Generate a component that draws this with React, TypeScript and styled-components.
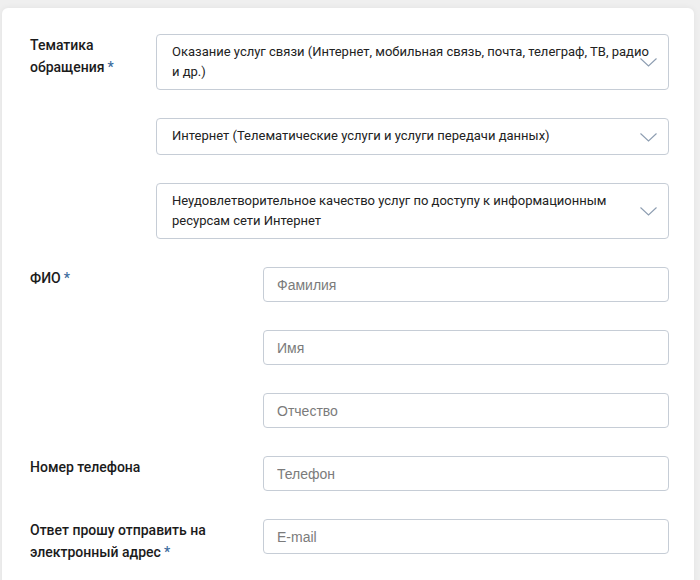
import React from 'react';
import styled, { createGlobalStyle } from 'styled-components';

const GlobalStyle = createGlobalStyle`
  html, body {
    margin: 0;
    padding: 0;
    background: #efefef;
  }
  body {
    font-family: Roboto, "Liberation Sans", Arial, sans-serif;
  }
`;

const Page = styled.div`
  padding: 8px 6px 0 2px;
`;

const Card = styled.form`
  background: #fff;
  border-radius: 6px 6px 0 0;
  box-shadow: 0 0 6px rgba(0, 0, 0, 0.06);
  padding: 26px 25px 30px 28px;
  display: flex;
  flex-direction: column;
  gap: 28px;
`;

const Row = styled.div<{ $label: number }>`
  display: grid;
  grid-template-columns: ${(p) => p.$label}px 1fr;
  align-items: start;
`;

const Label = styled.label`
  font-size: 14px;
  font-weight: 500;
  line-height: 22px;
  color: #1b1b1b;
`;

const Star = styled.span`
  color: #3d6c9e;
  margin-left: 3px;
`;

const Fields = styled.div<{ $gap: number }>`
  display: flex;
  flex-direction: column;
  gap: ${(p) => p.$gap}px;
`;

const SelectBox = styled.div`
  position: relative;
  border: 1px solid #c6cdd6;
  border-radius: 4px;
  background: #fff;
  padding: 7px 12px 7px 15px;
  font-size: 13px;
  line-height: 20px;
  color: #222;
  min-height: 21px;
`;

const Chevron = styled.svg`
  position: absolute;
  right: 11px;
  top: 50%;
  margin-top: -4px;
  width: 17px;
  height: 9px;
`;

const Input = styled.input`
  box-sizing: border-box;
  width: 100%;
  height: 35px;
  border: 1px solid #c6cdd6;
  border-radius: 4px;
  padding: 0 13px;
  font-family: "Liberation Sans", Arial, sans-serif;
  font-size: 14px;
  color: #222;
  outline: none;
  &::placeholder {
    color: #7b7b7b;
  }
`;

const Select: React.FC<{ children: React.ReactNode }> = ({ children }) => (
  <SelectBox>
    {children}
    <Chevron viewBox="0 0 17 9" fill="none">
      <path d="M0.5 0.5 L8.5 8 L16.5 0.5" stroke="#8d9db1" strokeWidth="1.1" />
    </Chevron>
  </SelectBox>
);

const App: React.FC = () => (
  <Page>
    <GlobalStyle />
    <Card>
      <Row $label={126}>
        <Label>
          Тематика
          <br />
          обращения<Star>*</Star>
        </Label>
        <Fields $gap={28}>
          <Select>
            Оказание услуг связи (Интернет, мобильная связь, почта, телеграф, ТВ, радио и др.)
          </Select>
          <Select>Интернет (Телематические услуги и услуги передачи данных)</Select>
          <Select>
            Неудовлетворительное качество услуг по доступу к информационным ресурсам сети Интернет
          </Select>
        </Fields>
      </Row>
      <Row $label={233}>
        <Label>
          ФИО<Star>*</Star>
        </Label>
        <Fields $gap={28}>
          <Input placeholder="Фамилия" />
          <Input placeholder="Имя" />
          <Input placeholder="Отчество" />
        </Fields>
      </Row>
      <Row $label={233}>
        <Label>Номер телефона</Label>
        <Input placeholder="Телефон" />
      </Row>
      <Row $label={233}>
        <Label>
          Ответ прошу отправить на
          <br />
          электронный адрес<Star>*</Star>
        </Label>
        <Input placeholder="E-mail" />
      </Row>
    </Card>
  </Page>
);

export default App;
